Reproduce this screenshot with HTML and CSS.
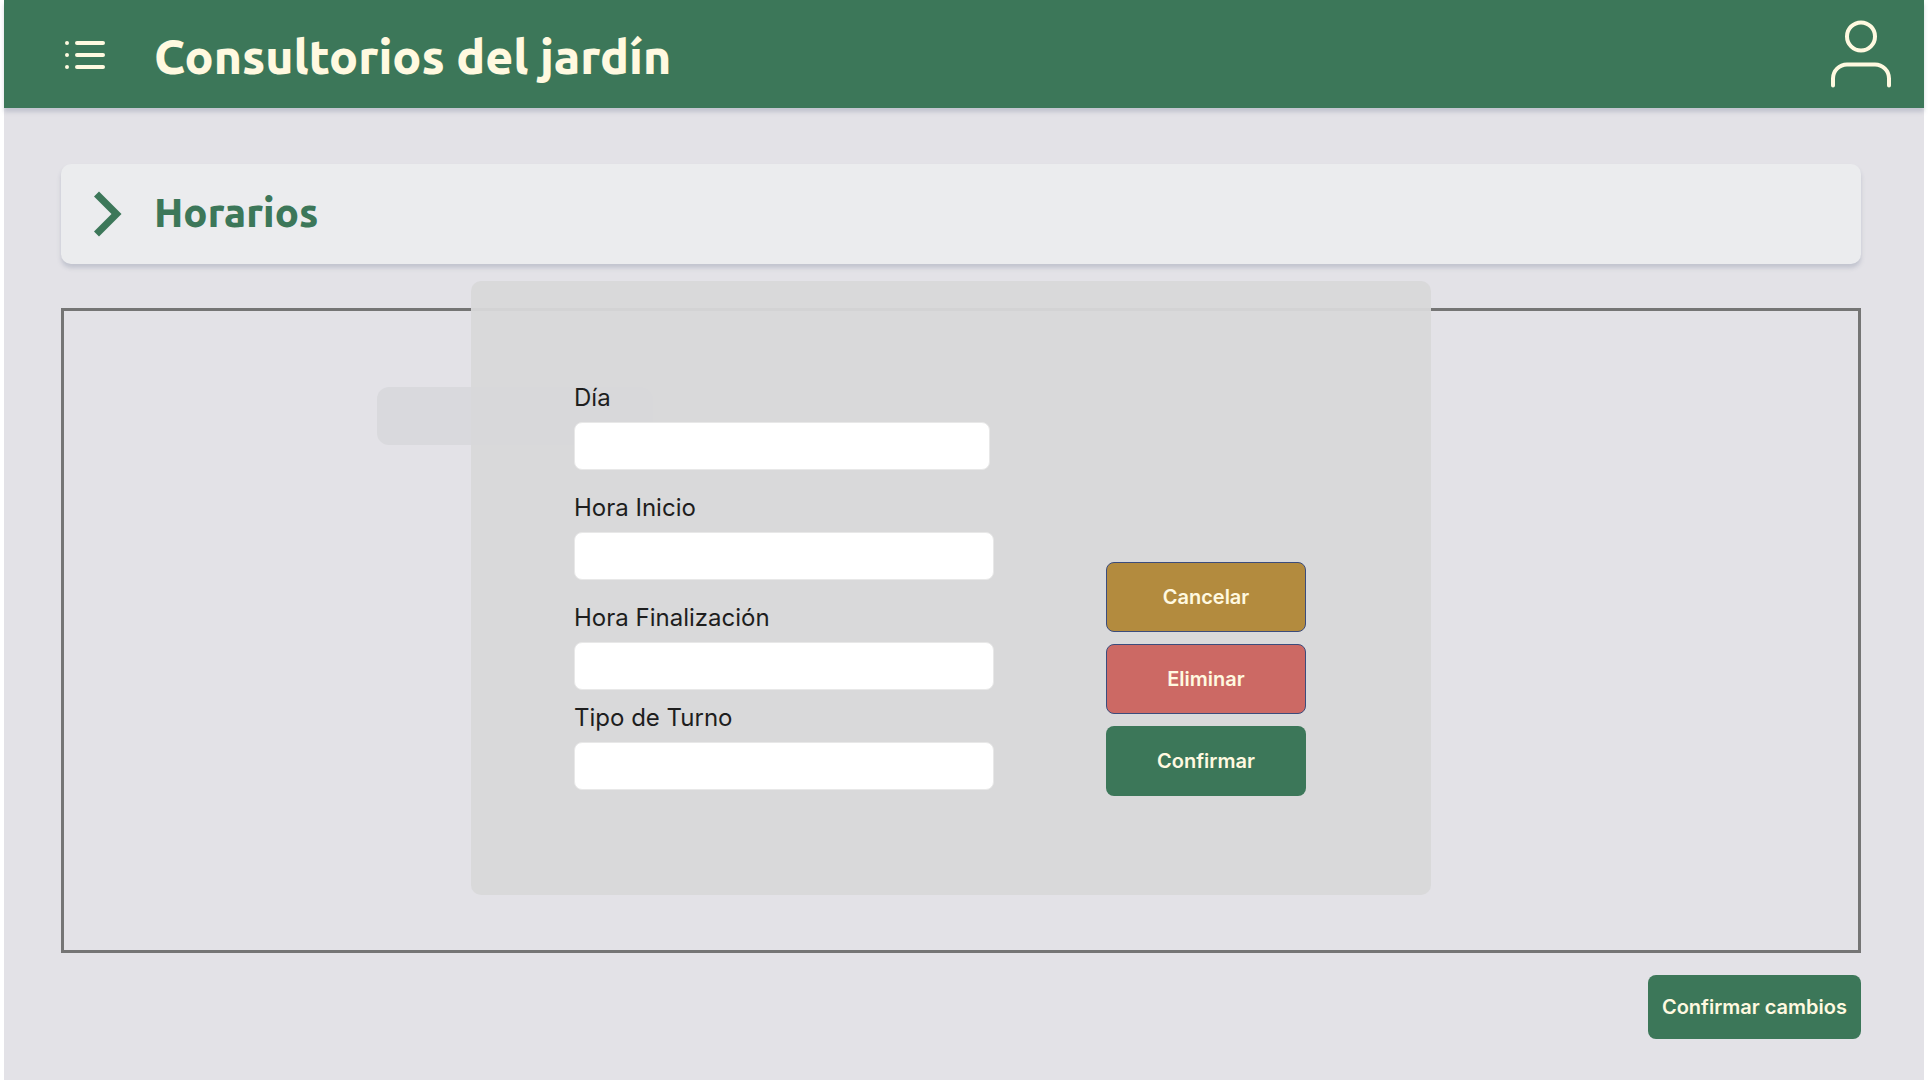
FILE: index.html
```html
<!DOCTYPE html>
<html lang="es">
<head>
  <meta charset="utf-8">
  <meta name="viewport" content="width=device-width, initial-scale=1">
  <title>Consultorios del jardín</title>
  <link rel="stylesheet" href="styles.css">
</head>
<body>
  <div class="page">
    <header class="topbar">
      <button class="icon-button" type="button" aria-label="Menú">
        <svg width="42" height="32" viewBox="0 0 42 32" fill="none" stroke="currentColor" stroke-width="4" stroke-linecap="round">
          <path d="M14 4h26M14 16h26M14 28h26"/>
          <path d="M4 4h0M4 16h0M4 28h0"/>
        </svg>
      </button>
      <h1 class="brand">Consultorios del jardín</h1>
      <button class="icon-button user" type="button" aria-label="Usuario">
        <svg width="60" height="70" viewBox="0 0 60 70" fill="none" stroke="currentColor" stroke-width="4" stroke-linecap="round">
          <circle cx="30" cy="16.4" r="14"/>
          <path d="M2 65.5v-7a14 14 0 0 1 14-14h28a14 14 0 0 1 14 14v7"/>
        </svg>
      </button>
    </header>
    <main class="content">
      <section class="section-title">
        <svg class="chevron" width="28" height="46" viewBox="0 0 28 46" fill="currentColor">
          <path d="M5 0.5L27.500 23 5 45.500 0 40.500 17.500 23 0 5.500z"/>
        </svg>
        <h2 class="section-name">Horarios</h2>
      </section>
      <section class="board">
        <div class="slot"></div>
        <form class="dialog" role="dialog" aria-label="Horario">
          <div class="fields">
            <div class="field field-day">
              <label for="dia">Día</label>
              <input id="dia" type="text">
            </div>
            <div class="field">
              <label for="inicio">Hora Inicio</label>
              <input id="inicio" type="text">
            </div>
            <div class="field">
              <label for="fin">Hora Finalización</label>
              <input id="fin" type="text">
            </div>
            <div class="field field-type">
              <label for="tipo">Tipo de Turno</label>
              <input id="tipo" type="text">
            </div>
          </div>
          <div class="actions">
            <button class="btn cancel" type="button">Cancelar</button>
            <button class="btn delete" type="button">Eliminar</button>
            <button class="btn confirm" type="submit">Confirmar</button>
          </div>
        </form>
      </section>
      <button class="btn save" type="button">Confirmar cambios</button>
    </main>
  </div>
</body>
</html>
```
FILE: styles.css
```css
:root {
  --green: #3c7759;
  --cream: #fff9e0;
  --shadow: 0 4px 4px rgba(120, 128, 152, 0.3);
}

* {
  box-sizing: border-box;
}

body {
  margin: 0;
  background: #fff;
  font-family: Inter, "Liberation Sans", sans-serif;
  color: #1e1e1e;
}

.page {
  display: flex;
  flex-direction: column;
  min-height: 100vh;
  margin: 0 4px;
  background: #e3e2e7;
}

.topbar {
  display: flex;
  align-items: center;
  height: 108px;
  padding: 2px 33px 0 59px;
  background: var(--green);
  color: var(--cream);
  box-shadow: var(--shadow);
}

.icon-button {
  display: flex;
  padding: 0;
  border: 0;
  background: none;
  color: inherit;
}

.user {
  margin-left: auto;
}

.brand,
.section-name {
  margin: 0;
  font-family: Ubuntu, "Noto Sans", sans-serif;
  font-weight: 800;
}

.brand {
  margin-left: 49px;
  padding-top: 2px;
  font-size: 48px;
  line-height: 56px;
}

.content {
  display: flex;
  flex: 1;
  flex-direction: column;
  padding: 56px 63px 41px 57px;
}

.section-title {
  display: flex;
  align-items: center;
  gap: 32px;
  height: 100px;
  padding: 0 33px;
  border-radius: 10px;
  background: #ebecee;
  box-shadow: var(--shadow);
  color: var(--green);
}

.section-name {
  padding-bottom: 2px;
  font-size: 40px;
  line-height: 48px;
}

.board {
  position: relative;
  flex: 1;
  min-height: 645px;
  margin: 44px 0 22px;
  padding: 76px 313px;
  border: 3px solid #757575;
}

.slot {
  width: 276px;
  height: 58px;
  border-radius: 12px;
  background: #d9d9dd;
}

.dialog {
  position: absolute;
  top: -30px;
  left: calc(50% - 490px);
  display: grid;
  grid-template-columns: 532px 200px;
  width: 960px;
  min-height: 614px;
  padding: 101px 103px 99px;
  border-radius: 10px;
  background: rgba(216, 216, 217, 0.95);
}

.fields {
  display: flex;
  flex-direction: column;
  gap: 22px;
}

.field {
  display: flex;
  flex-direction: column;
  gap: 8px;
  width: 420px;
  font-size: 24px;
  font-weight: 400;
  line-height: 32px;
}

.field-day {
  width: 416px;
}

.field-type {
  margin-top: -10px;
}

.field input {
  width: 100%;
  height: 48px;
  padding: 0 12px;
  border: 1px solid #e8e8e8;
  border-radius: 8px;
  background: #fff;
  font: inherit;
}

.actions {
  display: flex;
  flex-direction: column;
  align-self: end;
  gap: 12px;
}

.btn {
  height: 70px;
  padding: 0 14px;
  border: 0;
  border-radius: 8px;
  background: var(--green);
  color: var(--cream);
  font-family: inherit;
  font-size: 20px;
  font-weight: 600;
  line-height: 24px;
}

.cancel {
  border: 1px solid #3b4c7c;
  background: #b38b3e;
}

.delete {
  border: 1px solid #3b4c7c;
  background: #cc6964;
}

.save {
  align-self: flex-end;
  height: 64px;
}
```
